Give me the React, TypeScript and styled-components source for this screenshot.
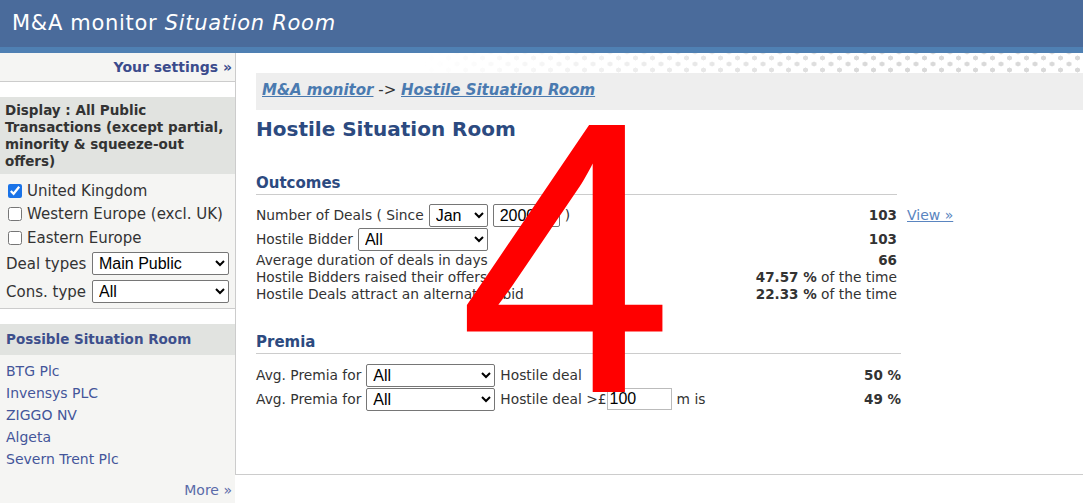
import styled, { createGlobalStyle } from "styled-components";

const GlobalStyle = createGlobalStyle`
  html, body {
    margin: 0;
    padding: 0;
    background: #ffffff;
    font-family: "DejaVu Sans", Verdana, sans-serif;
    color: #333333;
  }
  * { box-sizing: border-box; }
`;

const Page = styled.div`
  position: relative;
  width: 1083px;
  height: 503px;
  overflow: hidden;
`;

const Header = styled.header`
  height: 53px;
  background: #4a6b9b;
  border-bottom: 6px solid #4f80b3;
  padding-left: 12px;
  color: #ffffff;
  font-size: 21px;
  line-height: 47px;
  letter-spacing: 0.7px;

  em {
    font-style: italic;
  }
`;

const Body = styled.div`
  display: flex;
  height: 450px;
`;

const Sidebar = styled.aside`
  width: 235px;
  flex-shrink: 0;
  display: flex;
  flex-direction: column;
`;

const SettingsBar = styled.div`
  height: 29px;
  background: #f5f5f3;
  border-bottom: 1px solid #cccccc;
  text-align: right;
  padding-right: 3px;
  font-size: 14px;
  font-weight: bold;
  line-height: 28px;
  color: #3b4b8c;
`;

const BoxHeader = styled.div<{ $tall?: boolean }>`
  margin-top: 15px;
  background: #e1e3e0;
  padding: ${({ $tall }) => ($tall ? "5px 3px 4px 5px" : "0 6px")};
  font-size: 13.5px;
  font-weight: bold;
  line-height: ${({ $tall }) => ($tall ? "17px" : "31px")};
  color: ${({ $tall }) => ($tall ? "#333333" : "#3d4f8c")};
`;

const Filters = styled.div`
  background: #f5f5f3;
  border-bottom: 1px solid #cccccc;
  padding: 5px 6px 2px 6px;
  display: flex;
  flex-direction: column;
`;

const CheckRow = styled.label`
  display: flex;
  align-items: center;
  height: 23.5px;
  font-size: 15px;
  color: #333333;

  input {
    width: 14px;
    height: 14px;
    margin: 0 5px 0 2px;
    accent-color: #1a73e8;
  }
`;

const SelectRow = styled.div`
  display: flex;
  align-items: center;
  justify-content: space-between;
  height: 28px;
  font-size: 15px;
  color: #333333;
`;

const Select = styled.select<{ $w: number }>`
  width: ${({ $w }) => $w}px;
  height: 23px;
  font-family: "Liberation Sans", Arial, sans-serif;
  font-size: 16px;
  color: #000000;
  background: #ffffff;
  border: 1px solid #767676;
  border-radius: 2px;
  padding: 0 2px;
`;

const CompanyList = styled.div`
  flex: 1;
  background: #f5f5f3;
  padding: 5px 6px;
  display: flex;
  flex-direction: column;
`;

const Company = styled.a`
  font-size: 14px;
  line-height: 22px;
  color: #44559a;
  text-decoration: none;
`;

const More = styled.a`
  margin-top: 9px;
  align-self: flex-end;
  margin-right: -3px;
  font-size: 14px;
  line-height: 22px;
  color: #5a6aa8;
  text-decoration: none;
`;

const Main = styled.main`
  flex: 1;
  align-self: flex-start;
  height: 422px;
  border-left: 1px solid #cccccc;
  border-bottom: 1px solid #cccccc;
`;

const Dots = styled.div`
  height: 20px;
  background-image: radial-gradient(circle, #d9d9d9 2.3px, transparent 2.7px),
    radial-gradient(circle, #d9d9d9 2.3px, transparent 2.7px);
  background-size: 17px 12px;
  background-position: 0 -1px, 8.5px 5px;
  -webkit-mask-image: linear-gradient(to right, transparent 22%, #000 75%);
  mask-image: linear-gradient(to right, transparent 22%, #000 75%);
`;

const Content = styled.div`
  padding-left: 20px;
`;

const Breadcrumb = styled.div`
  height: 37px;
  background: #eeeeee;
  padding-left: 6px;
  line-height: 35px;
  font-size: 15px;
  color: #333333;

  a {
    font-weight: bold;
    font-style: italic;
    color: #4a7ab0;
    text-decoration: underline;
  }
`;

const Title = styled.h1`
  margin: 7px 0 0;
  font-size: 20px;
  line-height: 24px;
  font-weight: bold;
  color: #2c4a80;
`;

const SectionTitle = styled.h2<{ $w: number; $mt: number }>`
  width: ${({ $w }) => $w}px;
  margin: ${({ $mt }) => $mt}px 0 0;
  padding-bottom: 2px;
  border-bottom: 1px solid #cccccc;
  font-size: 15px;
  line-height: 18px;
  font-weight: bold;
  color: #2c4a80;
`;

const Stats = styled.div<{ $w: number; $mt: number }>`
  display: grid;
  grid-template-columns: ${({ $w }) => $w}px auto;
  column-gap: 10px;
  margin-top: ${({ $mt }) => $mt}px;
  font-size: 13.8px;
  color: #333333;
`;

const StatRow = styled.div<{ $tall?: boolean }>`
  display: flex;
  align-items: center;
  justify-content: space-between;
  height: ${({ $tall }) => ($tall ? "24px" : "17px")};
  grid-column: 1;
`;

const Label = styled.div`
  display: flex;
  align-items: center;
  gap: 5px;
  white-space: nowrap;
`;

const Value = styled.div`
  text-align: right;
  white-space: nowrap;

  b {
    font-weight: bold;
    font-size: 13.5px;
  }
`;

const ViewLink = styled.a`
  grid-column: 2;
  grid-row: 1;
  align-self: center;
  font-size: 14px;
  color: #5a85c0;
  text-decoration: underline;
`;

const Amount = styled.input`
  width: 65px;
  height: 22px;
  margin-left: -5px;
  border: 1px solid #bbbbbb;
  font-family: "Liberation Sans", Arial, sans-serif;
  font-size: 16px;
  padding: 0 2px;
  color: #000000;
`;

const BigNumber = styled.div`
  position: absolute;
  left: 458px;
  top: 64px;
  font-family: "Liberation Sans", Arial, sans-serif;
  font-size: 388px;
  line-height: 1;
  color: #ff0000;
  pointer-events: none;
`;

const companies = ["BTG Plc", "Invensys PLC", "ZIGGO NV", "Algeta", "Severn Trent Plc"];

export default function App() {
  return (
    <Page>
      <GlobalStyle />
      <Header>
        M&amp;A monitor <em>Situation Room</em>
      </Header>
      <Body>
        <Sidebar>
          <SettingsBar>Your settings »</SettingsBar>
          <BoxHeader $tall>
            Display : All Public Transactions (except partial, minority &amp; squeeze-out offers)
          </BoxHeader>
          <Filters>
            <CheckRow>
              <input type="checkbox" defaultChecked />
              United Kingdom
            </CheckRow>
            <CheckRow>
              <input type="checkbox" />
              Western Europe (excl. UK)
            </CheckRow>
            <CheckRow>
              <input type="checkbox" />
              Eastern Europe
            </CheckRow>
            <SelectRow>
              Deal types
              <Select $w={137} defaultValue="main">
                <option value="main">Main Public</option>
              </Select>
            </SelectRow>
            <SelectRow>
              Cons. type
              <Select $w={137} defaultValue="all">
                <option value="all">All</option>
              </Select>
            </SelectRow>
          </Filters>
          <BoxHeader>Possible Situation Room</BoxHeader>
          <CompanyList>
            {companies.map((c) => (
              <Company key={c}>{c}</Company>
            ))}
            <More>More »</More>
          </CompanyList>
        </Sidebar>
        <Main>
          <Dots />
          <Content>
            <Breadcrumb>
              <a>M&amp;A monitor</a> -&gt; <a>Hostile Situation Room</a>
            </Breadcrumb>
            <Title>Hostile Situation Room</Title>

            <SectionTitle $w={641} $mt={33}>Outcomes</SectionTitle>
            <Stats $w={641} $mt={8}>
              <StatRow $tall>
                <Label>
                  Number of Deals ( Since
                  <Select $w={59} defaultValue="jan">
                    <option value="jan">Jan</option>
                  </Select>
                  <Select $w={67} defaultValue="2000">
                    <option value="2000">2000</option>
                  </Select>
                  )
                </Label>
                <Value><b>103</b></Value>
              </StatRow>
              <ViewLink>View »</ViewLink>
              <StatRow $tall>
                <Label>
                  Hostile Bidder
                  <Select $w={130} defaultValue="all">
                    <option value="all">All</option>
                  </Select>
                </Label>
                <Value><b>103</b></Value>
              </StatRow>
              <StatRow>
                <Label>Average duration of deals in days</Label>
                <Value><b>66</b></Value>
              </StatRow>
              <StatRow>
                <Label>Hostile Bidders raised their offers</Label>
                <Value><b>47.57 %</b> of the time</Value>
              </StatRow>
              <StatRow>
                <Label>Hostile Deals attract an alternative bid</Label>
                <Value><b>22.33 %</b> of the time</Value>
              </StatRow>
            </Stats>

            <SectionTitle $w={645} $mt={31}>Premia</SectionTitle>
            <Stats $w={645} $mt={9}>
              <StatRow $tall>
                <Label>
                  Avg. Premia for
                  <Select $w={129} defaultValue="all">
                    <option value="all">All</option>
                  </Select>
                  Hostile deal
                </Label>
                <Value><b>50 %</b></Value>
              </StatRow>
              <StatRow $tall>
                <Label>
                  Avg. Premia for
                  <Select $w={129} defaultValue="all">
                    <option value="all">All</option>
                  </Select>
                  Hostile deal &gt;£<Amount defaultValue="100" />m is
                </Label>
                <Value><b>49 %</b></Value>
              </StatRow>
            </Stats>
          </Content>
        </Main>
      </Body>
      <BigNumber>4</BigNumber>
    </Page>
  );
}
